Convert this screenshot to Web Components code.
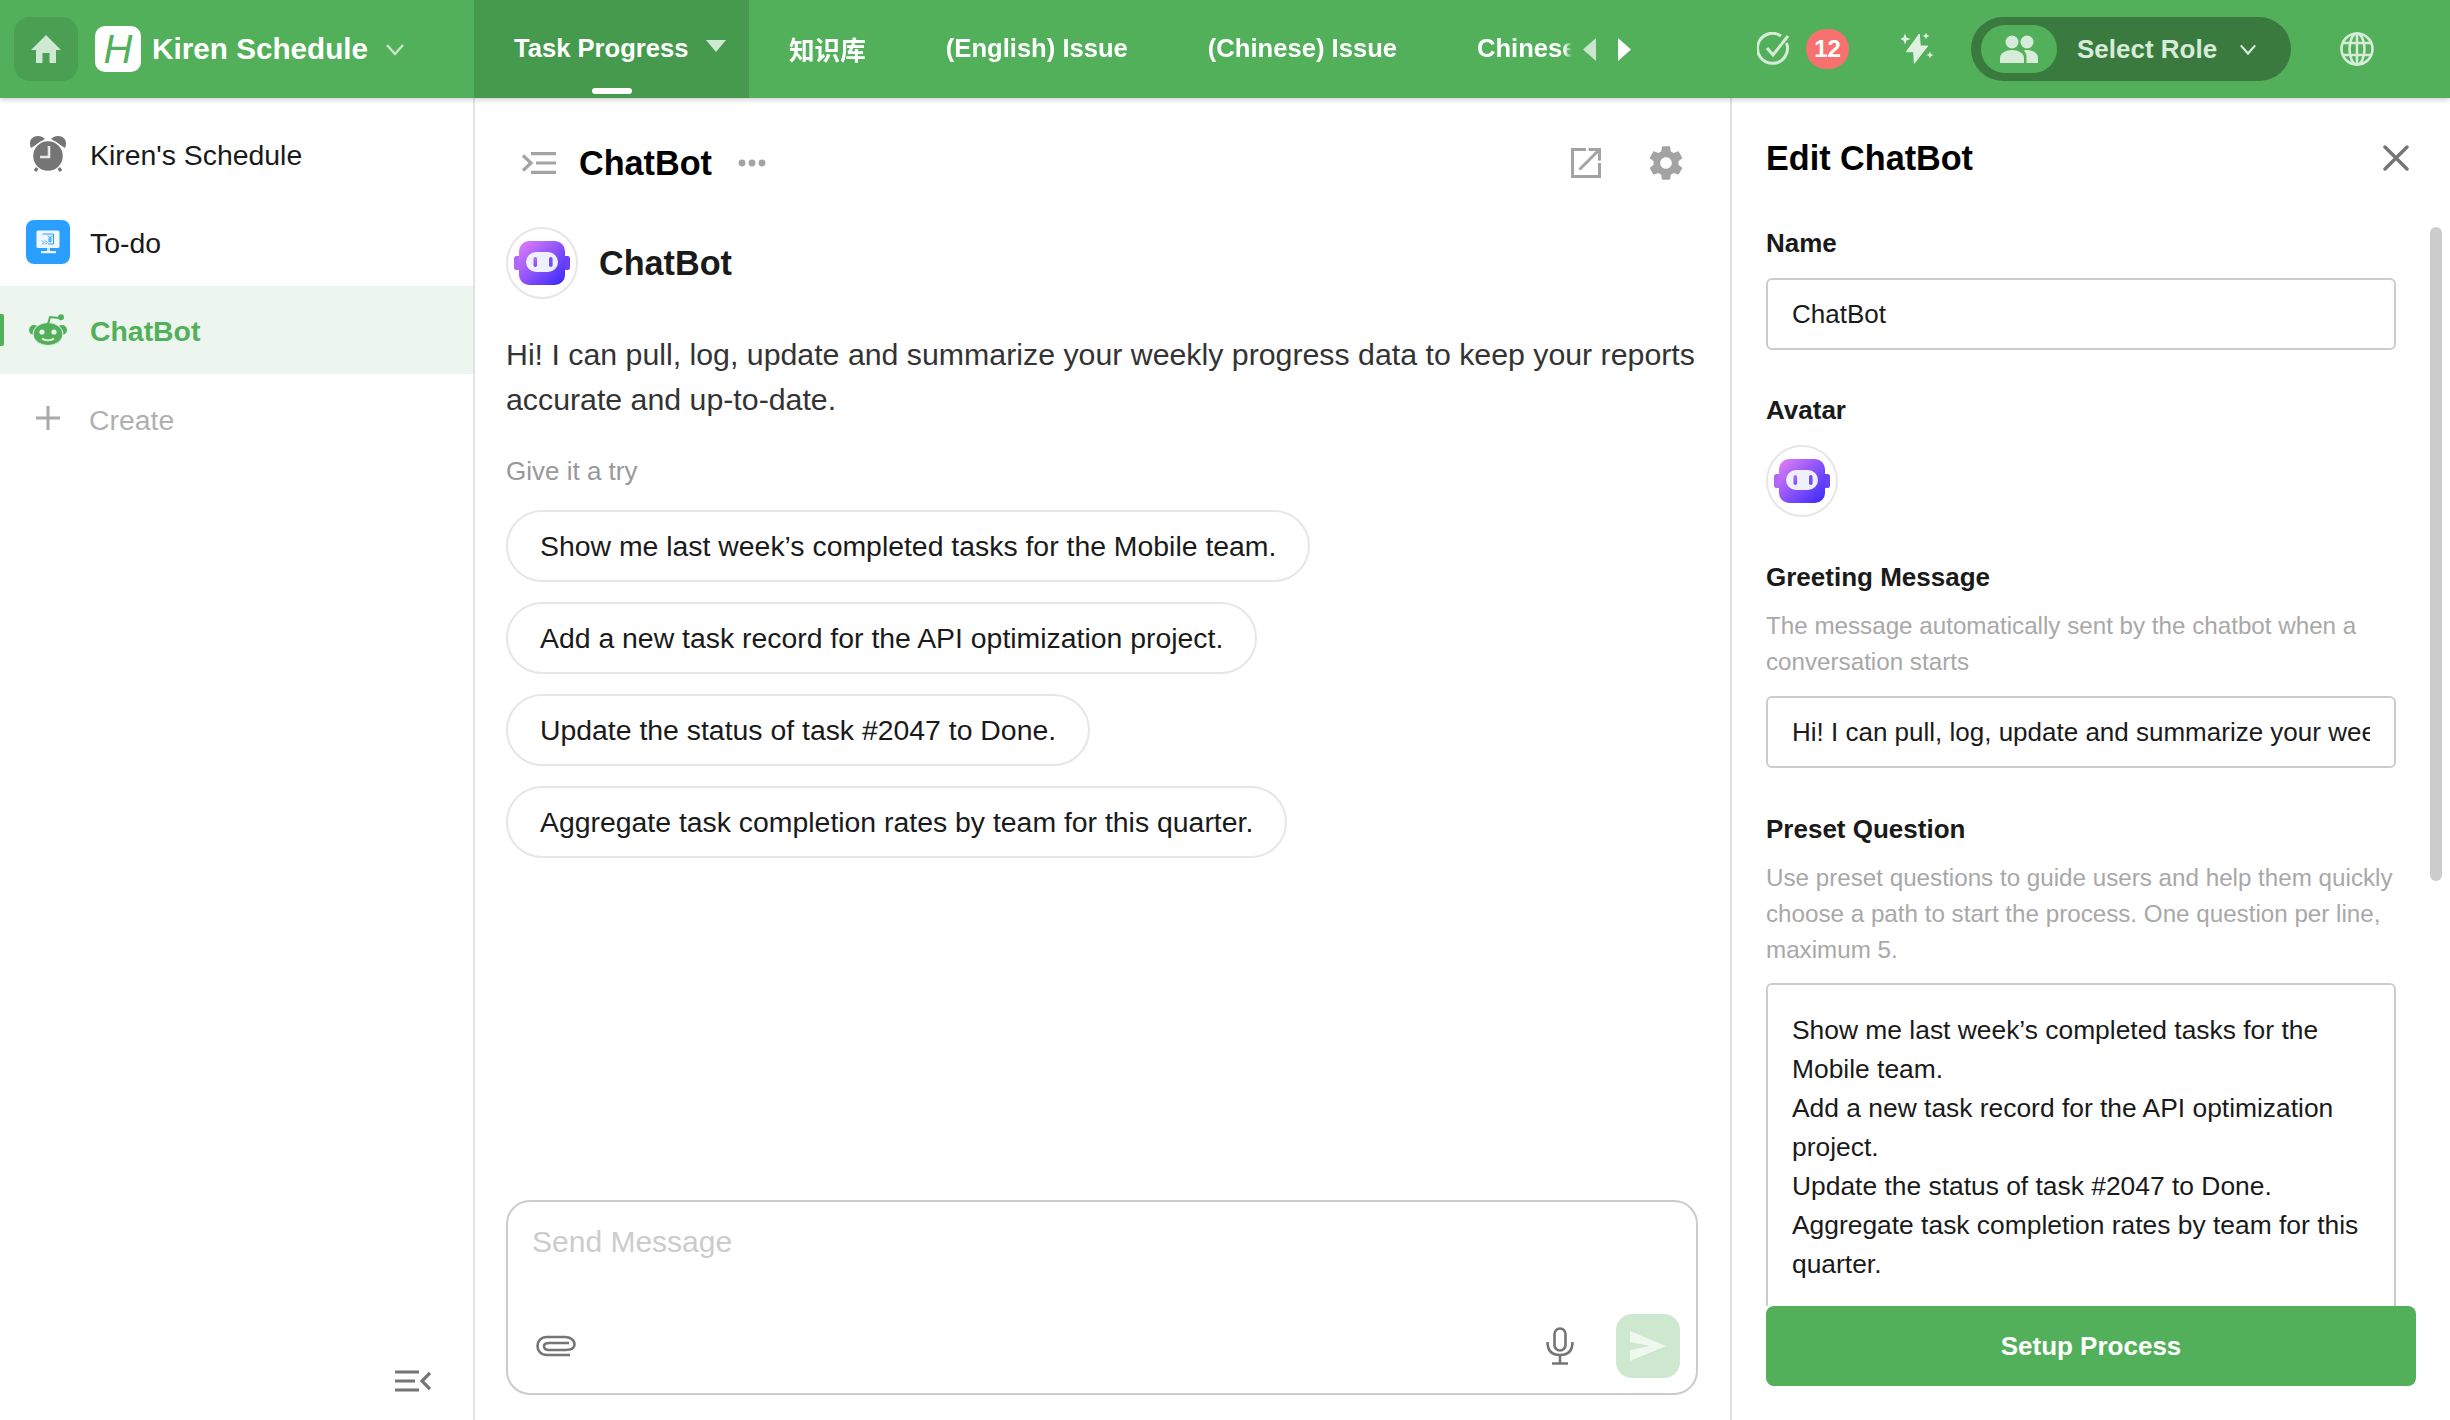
<!DOCTYPE html>
<html><head><meta charset="utf-8"><style>
html,body{margin:0;padding:0;height:100%;overflow:hidden}
body{font-family:"Liberation Sans","Noto Sans CJK SC",sans-serif;color:#1a1a1a}
</style></head><body>
<kiren-app></kiren-app>
<script>
const star=(x,y,r)=>`M${x} ${y-r}L${x+r*.28} ${y-r*.28}L${x+r} ${y}L${x+r*.28} ${y+r*.28}L${x} ${y+r}L${x-r*.28} ${y+r*.28}L${x-r} ${y}L${x-r*.28} ${y-r*.28}Z`;
const I={
home:'<svg width="32" height="32" viewBox="0 0 32 32"><path d="M16 2 L31 17 H26 V30 H19.5 V20 H12.5 V30 H6 V17 H1Z" fill="#cfe8d1"/></svg>',
chev:(c,s=20)=>`<svg width="${s}" height="${s}" viewBox="0 0 20 20"><path d="M2 6 L10 15 L18 6" fill="none" stroke="${c}" stroke-width="2.4"/></svg>`,
tri:'<svg width="20" height="12" viewBox="0 0 20 12"><path d="M0 0H20L10 12Z" fill="#cfe8d1"/></svg>',
left:'<svg width="13" height="23" viewBox="0 0 13 23"><path d="M13 0V23L0 11.5Z" fill="#c9e5cb"/></svg>',
right:'<svg width="13" height="23" viewBox="0 0 13 23"><path d="M0 0V23L13 11.5Z" fill="#fff"/></svg>',
check:'<svg width="34" height="34" viewBox="0 0 34 34" fill="none" stroke="#d6ecd8" stroke-width="3"><path d="M29.5 11A15 15 0 1 1 24 4"/><path d="M10 16 L16 23 L31 4"/></svg>',
bolt:`<svg width="34" height="32" viewBox="0 0 34 32"><path d="M18.3 1 L5.3 18.7 H12.7 L13.3 30.3 L26.7 13 H19.3Z" fill="#e0f0e1" stroke="#e0f0e1" stroke-width="1" stroke-linejoin="round"/><path d="${star(4,6,5.5)}${star(25,3,3.6)}${star(29,22,3.6)}" fill="#e0f0e1"/></svg>`,
people:'<svg width="38" height="28" viewBox="0 0 38 28" fill="#d6ecd8"><circle cx="12" cy="7" r="6.5"/><circle cx="27" cy="7" r="6.5"/><path d="M0 28V23C0 18 6 15 12 15S24 18 24 23V28Z"/><path d="M26.5 28V22C26.5 19 25.5 17 23.5 15.5C24.5 15.2 26 15 27 15C33 15 38 18 38 23V28Z"/></svg>',
globe:'<svg width="34" height="34" viewBox="0 0 34 34" fill="none" stroke="#d6ecd8" stroke-width="2.6"><circle cx="17" cy="17" r="15.5"/><ellipse cx="17" cy="17" rx="7.5" ry="15.5"/><path d="M17 1.5V32.5M3 11H31M3 23H31"/></svg>',
alarm:'<svg width="38" height="36" viewBox="0 0 38 36"><path d="M2 12C-1 5 3 0 9 0C12 0 14 1 16 3Z M36 12C39 5 35 0 29 0C26 0 24 1 22 3Z" fill="#757575"/><path d="M9 31L6 35M29 31L32 35" stroke="#757575" stroke-width="3"/><circle cx="19" cy="20" r="15.5" fill="#757575" stroke="#fff" stroke-width="1.5"/><path d="M20 10V21H11" fill="none" stroke="#eaeaea" stroke-width="2.6"/></svg>',
todo:'<svg width="44" height="44" viewBox="0 0 44 44"><rect width="44" height="44" rx="8" fill="#2b9fff"/><rect x="10.5" y="10.5" width="23" height="17.5" rx="1.5" fill="#eef7ff"/><path d="M21 28H24V31H21Z" fill="#cfe7ff"/><rect x="15" y="31" width="15" height="2.2" fill="#eef7ff"/><path d="M16.5 14H27.5V24H22" fill="none" stroke="#2b9fff" stroke-width="1"/><path d="M22 15.5L24 18L26 15.5M24 18V22.5M22 19H26M22 21H26M16 20.5L18 22.5L16 24.5M19 20.5L21 22.5L19 24.5" fill="none" stroke="#2b9fff" stroke-width="1"/></svg>',
reddit:'<svg width="38" height="32" viewBox="0 0 38 32"><circle cx="5" cy="16" r="5" fill="#52b05a"/><circle cx="33" cy="16" r="5" fill="#52b05a"/><ellipse cx="19" cy="20" rx="15" ry="11.5" fill="#52b05a" stroke="#edf6ee" stroke-width="1"/><path d="M19 10 L21 3 L30 4" fill="none" stroke="#52b05a" stroke-width="2"/><circle cx="32" cy="3.2" r="3" fill="#52b05a"/><circle cx="13" cy="18" r="2.6" fill="#edf6ee"/><circle cx="25" cy="18" r="2.6" fill="#edf6ee"/><path d="M13 24.5C16 27 22 27 25 24.5" fill="none" stroke="#edf6ee" stroke-width="1.8"/></svg>',
plus:'<svg width="24" height="24" viewBox="0 0 24 24"><path d="M12 0V24M0 12H24" stroke="#aaa" stroke-width="3"/></svg>',
collapse:'<svg width="36" height="24" viewBox="0 0 36 24" fill="none" stroke="#757575" stroke-width="3.2"><path d="M0 3H24M0 12H20M0 21H24M35 4L27 12L35 20"/></svg>',
indent:'<svg width="34" height="22" viewBox="0 0 34 22" fill="none" stroke="#a3a3a3" stroke-width="3.2"><path d="M9 1.6H34M14 11H34M9 20.4H34M1 3.5L9 11L1 18.5"/></svg>',
dots:'<svg width="28" height="8" viewBox="0 0 28 8" fill="#a3a3a3"><circle cx="4" cy="4" r="3.4"/><circle cx="14" cy="4" r="3.4"/><circle cx="24" cy="4" r="3.4"/></svg>',
ext:'<svg width="30" height="30" viewBox="0 0 30 30" fill="none" stroke="#a3a3a3" stroke-width="3"><path d="M15 1.5H1.5V28.5H28.5V15"/><path d="M8.5 21.5L27 3M17.5 1.5H28.5V12.5"/></svg>',
gear:'<svg width="40" height="40" viewBox="0 0 24 24"><path fill="#a3a3a3" d="M19.43 12.98c.04-.32.07-.64.07-.98s-.03-.66-.07-.98l2.11-1.65c.19-.15.24-.42.12-.64l-2-3.46c-.12-.22-.39-.3-.61-.22l-2.49 1c-.52-.4-1.08-.73-1.69-.98l-.38-2.65C14.46 2.18 14.25 2 14 2h-4c-.25 0-.46.18-.49.42l-.38 2.65c-.61.25-1.17.59-1.69.98l-2.49-1c-.23-.09-.49 0-.61.22l-2 3.46c-.13.22-.07.49.12.64l2.11 1.65c-.04.32-.07.65-.07.98s.03.66.07.98l-2.11 1.65c-.19.15-.24.42-.12.64l2 3.46c.12.22.39.3.61.22l2.49-1c.52.4 1.08.73 1.69.98l.38 2.65c.03.24.24.42.49.42h4c.25 0 .46-.18.49-.42l.38-2.65c.61-.25 1.17-.59 1.69-.98l2.49 1c.23.09.49 0 .61-.22l2-3.46c.12-.22.07-.49-.12-.64l-2.11-1.65zM12 15.5c-1.93 0-3.5-1.57-3.5-3.5s1.57-3.5 3.5-3.5 3.5 1.57 3.5 3.5-1.57 3.5-3.5 3.5z"/></svg>',
close:'<svg width="26" height="26" viewBox="0 0 26 26"><path d="M2 2L24 24M24 2L2 24" stroke="#757575" stroke-width="3.4" stroke-linecap="round"/></svg>',
clip:'<svg width="40" height="22" viewBox="0 0 40 22" fill="none" stroke="#757575" stroke-width="2.6"><path d="M34 20H11C5 20 1.5 16 1.5 11S5 2 11 2H29C34 2 38.5 5 38.5 9.5S34 15 29 15H13C10 15 8 13.5 8 11S10 8 13 8H33"/></svg>',
mic:'<svg width="28" height="38" viewBox="0 0 28 38" fill="none" stroke="#757575" stroke-width="2.6"><rect x="8.5" y="1.5" width="11" height="22" rx="5.5"/><path d="M1.5 15C1.5 24 6 28 14 28S26.5 24 26.5 15M14 28V36M6 36.5H22"/></svg>',
send:'<svg width="36" height="30" viewBox="0 0 36 30"><path d="M0 0L36 15L0 30L0 19L20 15L0 11Z" fill="#eef8ef"/></svg>'
};
const robot=(s)=>`<svg width="${s}" height="${s}" viewBox="0 0 72 72"><defs><linearGradient id="g" x1="0" y1="0" x2="1" y2="1"><stop offset="0" stop-color="#e57ff7"/><stop offset="1" stop-color="#3528fb"/></linearGradient><linearGradient id="e" x1="0" y1="0" x2="0" y2="1"><stop offset="0" stop-color="#b66cf6"/><stop offset="1" stop-color="#7d4cf9"/></linearGradient></defs><circle cx="36" cy="36" r="35" fill="#fff" stroke="#e6e6e6" stroke-width="2"/><rect x="8" y="29" width="7" height="14" rx="2.5" fill="#b167f6"/><rect x="57" y="29" width="7" height="14" rx="2.5" fill="#6a40f9"/><rect x="13" y="14" width="46" height="44" rx="10" fill="url(#g)"/><rect x="20" y="25" width="32" height="20" rx="10" fill="#eef0fd"/><rect x="27.5" y="30" width="3.6" height="10" rx="1.8" fill="url(#e)"/><rect x="43" y="30" width="3.6" height="10" rx="1.8" fill="#7a4cf8"/></svg>`;
function def(name,html){customElements.define(name,class extends HTMLElement{constructor(){super();this.attachShadow({mode:'open'}).innerHTML=typeof html==='function'?html(this):html}})}

def('top-tab',e=>`<style>:host{display:flex;align-items:center;flex:none;height:98px;padding:0 40px;color:#fff;font-size:25.6px;font-weight:700;position:relative;box-sizing:border-box;white-space:nowrap}
:host([active]){background:#459a4e;padding:0 0 0 40px;width:275px}
.u{position:absolute;left:118px;bottom:4px;width:40px;height:6px;border-radius:3px;background:#fff}
.t{display:block;margin-top:-7px;margin-left:17px;line-height:0}
span.l{margin-top:-2px}</style><span class="l"><slot></slot></span>${e.hasAttribute('active')?`<span class="t">${I.tri}</span><i class="u"></i>`:''}`);

def('top-bar',`<style>:host{display:flex;align-items:center;height:98px;background:#52b05a;box-shadow:0 2px 5px rgba(0,0,0,.18);position:relative;z-index:2;color:#fff}
.home{margin-left:14px;width:64px;height:64px;border-radius:16px;background:#4a9f52;display:flex;align-items:center;justify-content:center}
.logo{margin-left:17px;width:46px;height:46px;border-radius:10px;background:#fff;color:#52b05a;font:italic 400 40px "Liberation Sans",sans-serif;display:flex;align-items:center;justify-content:center}
.name{margin-left:11px;font-size:29.7px;font-weight:700;width:216px;white-space:nowrap}
.c1{margin-left:17px;display:flex;width:89px;opacity:.9}
.tabs{display:flex;width:1098px;overflow:hidden;flex:none;-webkit-mask-image:linear-gradient(to right,#000 1090px,transparent 1098px);mask-image:linear-gradient(to right,#000 1090px,transparent 1098px)}
.arrows{display:flex;gap:22px;margin-left:11px;width:48px}
.right{display:flex;align-items:center;margin-left:126px}
.badge{margin-left:15px;width:43px;height:40px;border-radius:20px;background:#f87171;font-size:24px;font-weight:700;display:flex;align-items:center;justify-content:center}
.bolt{margin-left:52px;display:flex}
.role{margin-left:36px;width:320px;height:64px;border-radius:32px;background:#3a7a3f;display:flex;align-items:center;box-sizing:border-box;padding-left:10px}
.in{width:76px;height:48px;border-radius:24px;background:#52b05a;display:flex;align-items:center;justify-content:center}
.st{margin-left:20px;font-size:26px;font-weight:700;color:#d6ecd8;width:162px;white-space:nowrap}
.glb{margin-left:49px;display:flex}
</style>
<div class="home">${I.home}</div><div class="logo">H</div><div class="name">Kiren Schedule</div><div class="c1">${I.chev('#d6ecd8')}</div>
<div class="tabs"><top-tab active>Task Progress</top-tab><top-tab>知识库</top-tab><top-tab>(English) Issue</top-tab><top-tab>(Chinese) Issue</top-tab><top-tab>Chinese Issue</top-tab></div>
<div class="arrows">${I.left}${I.right}</div>
<div class="right">${I.check}<div class="badge">12</div><div class="bolt">${I.bolt}</div><div class="role"><div class="in">${I.people}</div><div class="st">Select Role</div>${I.chev('#d6ecd8',18)}</div><div class="glb">${I.globe}</div></div>`);

def('nav-item',e=>`<style>:host{display:flex;align-items:center;height:88px;font-size:28.4px;color:#1a1a1a;position:relative;white-space:nowrap}
:host([active]){background:#edf6ee;color:#52b05a;font-weight:700}
:host([muted]){color:#b0b0b0}
:host([active])::before{content:"";position:absolute;left:0;top:28px;width:4px;height:32px;background:#52b05a;border-radius:0 2px 2px 0}
.i{width:44px;margin-left:26px;margin-right:20px;display:flex;justify-content:center}
.x{margin-top:2px}
:host([muted]) .x{margin-top:5px;margin-left:-1px}</style><div class="i"><slot name="icon"></slot></div><span class="x"><slot></slot></span>`);

def('side-bar',`<style>:host{display:flex;flex-direction:column;width:473px;flex:none;border-right:2px solid #e2e2e2;padding-top:12px;box-sizing:content-box;position:relative}
span[slot]{display:flex}
.b{margin-top:auto;padding:0 0 27px 395px;display:flex}
</style>
<nav-item><span slot="icon">${I.alarm}</span>Kiren's Schedule</nav-item>
<nav-item><span slot="icon">${I.todo}</span>To-do</nav-item>
<nav-item active><span slot="icon">${I.reddit}</span>ChatBot</nav-item>
<nav-item muted><span slot="icon">${I.plus}</span>Create</nav-item>
<div class="b">${I.collapse}</div>`);

def('try-chip',`<style>:host{display:block;width:fit-content;box-sizing:border-box;height:72px;line-height:68px;padding:0 32px;border:2px solid #e6e6e6;border-radius:36px;font-size:28.4px;color:#1a1a1a;white-space:nowrap}</style><slot></slot>`);

def('bot-avatar',e=>`<style>:host{display:flex;flex:none}</style>${robot(+e.getAttribute('size')||72)}`);

def('chat-pane',`<style>:host{display:flex;flex-direction:column;flex:none;width:1255px;border-right:2px solid #e2e2e2;box-sizing:content-box;padding:0}
.h{display:flex;align-items:center;height:80px;margin-top:25px;padding-left:47px}
.h b{font-size:34.2px;font-weight:700;color:#000;margin-left:23px}
.d{margin-left:26px;display:flex}
.a{margin-left:auto;display:flex;align-items:center;gap:45px;padding-right:44px}
.who{display:flex;align-items:center;margin:24px 0 0 31px;gap:21px}
.who b{font-size:34.2px;font-weight:700;color:#1a1a1a}
.msg{margin:33px 30px 0 31px;font-size:30.3px;line-height:45px;color:#333}
.try{margin:31px 0 0 31px;font-size:26px;color:#999;line-height:36px}
.chips{display:flex;flex-direction:column;gap:20px;margin:21px 0 0 31px}
.comp{margin:auto 0 25px 31px;width:1192px;height:195px;box-sizing:border-box;border:2px solid #ccc;border-radius:24px;padding:0 16px 15px 24px;display:flex;flex-direction:column;flex:none}
.ph{font-size:30px;color:#ccc;line-height:40px;margin-top:20px}
.row{margin-top:auto;display:flex;align-items:center}
.clip{margin-left:4px;display:flex}
.mic{margin-left:auto;display:flex}
.send{margin-left:42px;width:64px;height:64px;border-radius:16px;background:#cde8cf;display:flex;align-items:center;justify-content:center}
</style>
<div class="h">${I.indent}<b>ChatBot</b><span class="d">${I.dots}</span><div class="a">${I.ext}${I.gear}</div></div>
<div class="who"><bot-avatar size="72"></bot-avatar><b>ChatBot</b></div>
<div class="msg">Hi! I can pull, log, update and summarize your weekly progress data to keep your reports accurate and up-to-date.</div>
<div class="try">Give it a try</div>
<div class="chips"><try-chip>Show me last week’s completed tasks for the Mobile team.</try-chip><try-chip>Add a new task record for the API optimization project.</try-chip><try-chip>Update the status of task #2047 to Done.</try-chip><try-chip>Aggregate task completion rates by team for this quarter.</try-chip></div>
<div class="comp"><div class="ph">Send Message</div><div class="row"><span class="clip">${I.clip}</span><span class="mic">${I.mic}</span><div class="send">${I.send}</div></div></div>`);

def('form-field',e=>`<style>:host{display:block;margin-top:var(--mt,0);width:630px}
.l{font-size:26px;font-weight:700;color:#1a1a1a;line-height:36px}
.d{font-size:24.2px;line-height:36px;color:#a8a8a8;margin-top:13px}
.c{margin-top:var(--cm,17px)}</style><div class="l">${e.getAttribute('label')}</div>${e.hasAttribute('desc')?`<div class="d">${e.getAttribute('desc')}</div>`:''}<div class="c"><slot></slot></div>`);

def('text-box',`<style>:host{display:block;box-sizing:border-box;width:630px;height:72px;border:2px solid #ccc;border-radius:6px;padding:0 24px;font-size:26px;line-height:68px;color:#1a1a1a;white-space:nowrap}
div{overflow:hidden}</style><div><slot></slot></div>`);

def('text-area',`<style>:host{display:block;box-sizing:border-box;width:630px;border:2px solid #ccc;border-radius:6px;padding:26px 24px 60px;font-size:26.4px;line-height:39px;color:#1a1a1a}
div{white-space:pre-line}</style><div><slot></slot></div>`);

def('edit-panel',`<style>:host{display:flex;flex-direction:column;flex:1;min-width:0;position:relative}
.h{display:flex;align-items:center;justify-content:space-between;height:74px;margin:23px 0 0 34px;padding-right:41px;font-size:34.2px;font-weight:700;color:#000}
.close{display:flex}
.body{flex:1;min-height:0;overflow:hidden;padding:30px 0 0 34px}
.foot{padding:0 0 34px 34px;flex:none}
.btn{width:650px;height:80px;border-radius:8px;background:#52b05a;color:#fff;font-size:26px;font-weight:700;display:flex;align-items:center;justify-content:center}
.sb{position:absolute;right:8px;top:129px;width:12px;height:654px;border-radius:6px;background:#ccc}
</style>
<div class="h"><span>Edit ChatBot</span><span class="close">${I.close}</span></div>
<div class="body">
<form-field label="Name"><text-box>ChatBot</text-box></form-field>
<form-field label="Avatar" style="--mt:42px"><bot-avatar size="72"></bot-avatar></form-field>
<form-field label="Greeting Message" style="--mt:42px;--cm:16px" desc="The message automatically sent by the chatbot when a conversation starts"><text-box>Hi! I can pull, log, update and summarize your weekly progress data to keep your reports accurate and up-to-date.</text-box></form-field>
<form-field label="Preset Question" style="--mt:43px;--cm:15px" desc="Use preset questions to guide users and help them quickly choose a path to start the process. One question per line, maximum 5."><text-area>Show me last week’s completed tasks for the Mobile team.
Add a new task record for the API optimization project.
Update the status of task #2047 to Done.
Aggregate task completion rates by team for this quarter.</text-area></form-field>
</div>
<div class="foot"><div class="btn">Setup Process</div></div>
<div class="sb"></div>`);

def('kiren-app',`<style>:host{display:flex;flex-direction:column;width:2450px;height:1420px;background:#fff;overflow:hidden}
.m{flex:1;min-height:0;display:flex}</style><top-bar></top-bar><div class="m"><side-bar></side-bar><chat-pane></chat-pane><edit-panel></edit-panel></div>`);
</script></body></html>
